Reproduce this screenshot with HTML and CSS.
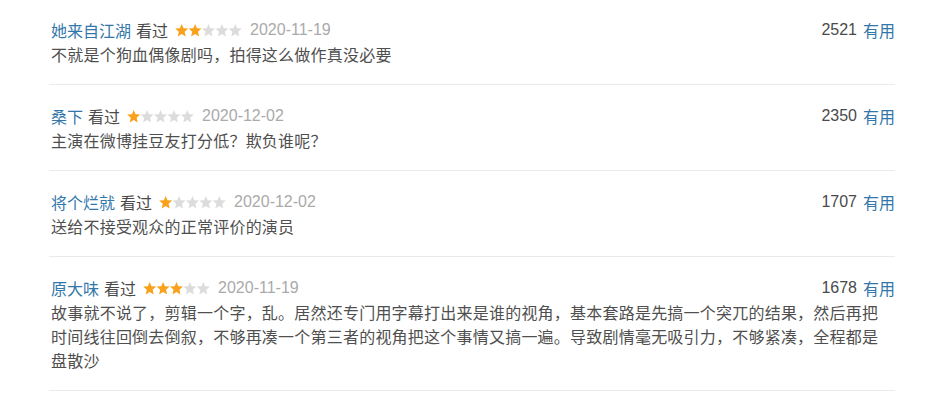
FILE: index.html
```html
<!DOCTYPE html>
<html lang="zh-CN">
<head>
<meta charset="utf-8">
<link rel="stylesheet" href="styles.css">
</head>
<body>
<div class="list">
  <div class="item">
    <div class="head">
      <div class="info">
        <a class="name">她来自江湖</a><span class="watched">看过</span>
        <svg class="stars" viewBox="0 0 67 13" width="67" height="13"><use href="#s" x="0" class="on"/><use href="#s" x="13.4" class="on"/><use href="#s" x="26.8"/><use href="#s" x="40.2"/><use href="#s" x="53.6"/></svg>
        <span class="date">2020-11-19</span>
      </div>
      <div class="votes"><span class="count">2521</span><a class="useful">有用</a></div>
    </div>
    <p class="comment">不就是个狗血偶像剧吗，拍得这么做作真没必要</p>
  </div>
  <div class="item">
    <div class="head">
      <div class="info">
        <a class="name">桑下</a><span class="watched">看过</span>
        <svg class="stars" viewBox="0 0 67 13" width="67" height="13"><use href="#s" x="0" class="on"/><use href="#s" x="13.4"/><use href="#s" x="26.8"/><use href="#s" x="40.2"/><use href="#s" x="53.6"/></svg>
        <span class="date">2020-12-02</span>
      </div>
      <div class="votes"><span class="count">2350</span><a class="useful">有用</a></div>
    </div>
    <p class="comment">主演在微博挂豆友打分低？欺负谁呢？</p>
  </div>
  <div class="item">
    <div class="head">
      <div class="info">
        <a class="name">将个烂就</a><span class="watched">看过</span>
        <svg class="stars" viewBox="0 0 67 13" width="67" height="13"><use href="#s" x="0" class="on"/><use href="#s" x="13.4"/><use href="#s" x="26.8"/><use href="#s" x="40.2"/><use href="#s" x="53.6"/></svg>
        <span class="date">2020-12-02</span>
      </div>
      <div class="votes"><span class="count">1707</span><a class="useful">有用</a></div>
    </div>
    <p class="comment">送给不接受观众的正常评价的演员</p>
  </div>
  <div class="item">
    <div class="head">
      <div class="info">
        <a class="name">原大味</a><span class="watched">看过</span>
        <svg class="stars" viewBox="0 0 67 13" width="67" height="13"><use href="#s" x="0" class="on"/><use href="#s" x="13.4" class="on"/><use href="#s" x="26.8" class="on"/><use href="#s" x="40.2"/><use href="#s" x="53.6"/></svg>
        <span class="date">2020-11-19</span>
      </div>
      <div class="votes"><span class="count">1678</span><a class="useful">有用</a></div>
    </div>
    <p class="comment">故事就不说了，剪辑一个字，乱。居然还专门用字幕打出来是谁的视角，基本套路是先搞一个突兀的结果，然后再把时间线往回倒去倒叙，不够再凑一个第三者的视角把这个事情又搞一遍。导致剧情毫无吸引力，不够紧凑，全程都是盘散沙</p>
  </div>
</div>
<svg width="0" height="0" class="defs">
  <defs>
    <polygon id="s" points="6.7,0 8.5,4.2 13.2,4.6 9.6,7.7 10.7,12.5 6.7,10 2.7,12.5 3.8,7.7 0.2,4.6 4.9,4.2"/>
  </defs>
</svg>
</body>
</html>
```

FILE: styles.css
```css
html, body {
  margin: 0;
  padding: 0;
  background: #fff;
}
body {
  font-family: "Liberation Sans", "Noto Sans CJK SC", sans-serif;
  color: #4a4a4a;
}
.defs {
  position: absolute;
}
.list {
  margin-left: 49px;
  width: 846px;
}
.item {
  padding: 17px 0 16px;
  border-bottom: 1px solid #eaeaea;
}
.item + .item {
  padding-top: 18px;
}
.head {
  display: flex;
  justify-content: space-between;
  align-items: center;
  height: 26px;
  font-size: 16px;
}
.info {
  display: flex;
  align-items: center;
}
.name {
  color: #3377aa;
  margin-left: 2px;
}
.watched {
  margin-left: 5px;
  color: #4a4a4a;
}
.stars {
  margin-left: 7px;
  fill: #dcdcdc;
}
.stars .on {
  fill: #f9a11a;
}
.date {
  margin-left: 8px;
  color: #aaaaaa;
}
.votes {
  display: flex;
  align-items: center;
}
.count {
  color: #4a4a4a;
}
.useful {
  color: #3377aa;
  margin-left: 6px;
}
.comment {
  margin: 1px 0 0 2px;
  width: 838px;
  font-size: 16px;
  letter-spacing: 0.22px;
  line-height: 24px;
  color: #4f4f4f;
}
```
